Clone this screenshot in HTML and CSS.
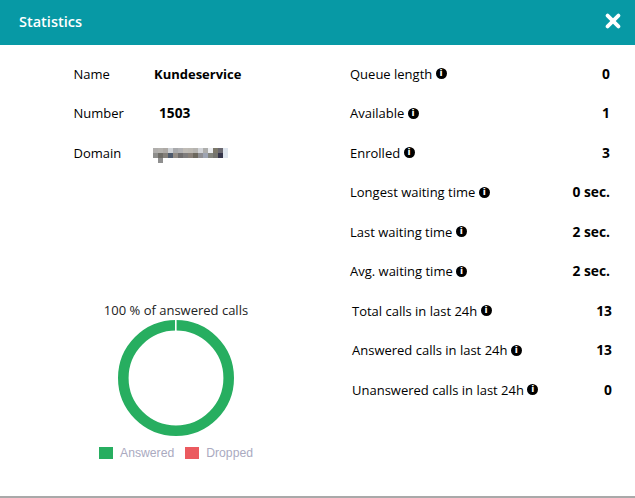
FILE: index.html
```html
<!DOCTYPE html>
<html lang="en">
<head>
<meta charset="utf-8">
<title>Statistics</title>
<link rel="stylesheet" href="styles.css">
</head>
<body>
<div class="modal">
  <header class="modal-header">
    <h1 class="modal-title">Statistics</h1>
    <svg class="close" viewBox="0 0 16 16" width="16" height="16" aria-label="Close"><path d="M2.6 2.6 13.4 13.4M13.4 2.6 2.6 13.4" stroke="#fff" stroke-width="3.8" stroke-linecap="round"/></svg>
  </header>
  <main class="modal-body">
    <section class="left">
      <div class="info">
        <div class="info-row"><span class="info-label">Name</span><strong class="info-value">Kundeservice</strong></div>
        <div class="info-row"><span class="info-label">Number</span><strong class="info-value number">1503</strong></div>
        <div class="info-row"><span class="info-label">Domain</span>
          <svg class="blur" width="75" height="15" viewBox="0 0 15 3" shape-rendering="crispEdges" aria-hidden="true">
            <rect x="0" y="0" width="1" height="1" fill="#b0aeac"/><rect x="1" y="0" width="1" height="1" fill="#b4b2ae"/><rect x="2" y="0" width="1" height="1" fill="#aeaaa6"/><rect x="3" y="0" width="1" height="1" fill="#cfd2d6"/><rect x="4" y="0" width="1" height="1" fill="#a9aaac"/><rect x="5" y="0" width="1" height="1" fill="#b2b2b4"/><rect x="6" y="0" width="1" height="1" fill="#c0bcb6"/><rect x="7" y="0" width="1" height="1" fill="#bdbab4"/><rect x="8" y="0" width="1" height="1" fill="#b6b4b0"/><rect x="9" y="0" width="1" height="1" fill="#d2d4d8"/><rect x="10" y="0" width="1" height="1" fill="#aeaeac"/><rect x="11" y="0" width="1" height="1" fill="#eceef2"/><rect x="12" y="0" width="1" height="1" fill="#7c786a"/><rect x="13" y="0" width="1" height="1" fill="#6a6870"/><rect x="14" y="0" width="1" height="1" fill="#dfe6ee"/>
            <rect x="0" y="1" width="1" height="1" fill="#8e8e8c"/><rect x="1" y="1" width="1" height="1" fill="#6e6c66"/><rect x="2" y="1" width="1" height="1" fill="#84807a"/><rect x="3" y="1" width="1" height="1" fill="#4e5a6c"/><rect x="4" y="1" width="1" height="1" fill="#928c86"/><rect x="5" y="1" width="1" height="1" fill="#6e6c6c"/><rect x="6" y="1" width="1" height="1" fill="#7e7c7c"/><rect x="7" y="1" width="1" height="1" fill="#888078"/><rect x="8" y="1" width="1" height="1" fill="#6c685e"/><rect x="9" y="1" width="1" height="1" fill="#8e8e92"/><rect x="10" y="1" width="1" height="1" fill="#9ea4b2"/><rect x="11" y="1" width="1" height="1" fill="#82847c"/><rect x="12" y="1" width="1" height="1" fill="#74746e"/><rect x="13" y="1" width="1" height="1" fill="#35354a"/><rect x="14" y="1" width="1" height="1" fill="#dfe6ee"/>
            <rect x="1" y="2" width="1" height="1" fill="#8f8f8f"/>
          </svg>
        </div>
      </div>
      <figure class="chart">
        <figcaption class="chart-title">100 % of answered calls</figcaption>
        <svg class="donut" width="116" height="116" viewBox="0 0 116 116" aria-hidden="true">
          <circle cx="58" cy="58" r="52.7" fill="none" stroke="#27ae60" stroke-width="10.6"/>
          <rect x="57" y="0" width="1.6" height="11" fill="#fff"/>
        </svg>
        <div class="legend">
          <span class="legend-item"><span class="swatch swatch-green"></span>Answered</span>
          <span class="legend-item"><span class="swatch swatch-red"></span>Dropped</span>
        </div>
      </figure>
    </section>
    <section class="right">
      <div class="stats">
        <div class="stat"><span class="stat-label">Queue length <i class="info-icon">i</i></span><strong class="stat-value">0</strong></div>
        <div class="stat"><span class="stat-label">Available <i class="info-icon">i</i></span><strong class="stat-value">1</strong></div>
        <div class="stat"><span class="stat-label">Enrolled <i class="info-icon">i</i></span><strong class="stat-value">3</strong></div>
        <div class="stat"><span class="stat-label">Longest waiting time <i class="info-icon">i</i></span><strong class="stat-value">0 sec.</strong></div>
        <div class="stat"><span class="stat-label">Last waiting time <i class="info-icon">i</i></span><strong class="stat-value">2 sec.</strong></div>
        <div class="stat"><span class="stat-label">Avg. waiting time <i class="info-icon">i</i></span><strong class="stat-value">2 sec.</strong></div>
      </div>
      <div class="stats stats-calls">
        <div class="stat"><span class="stat-label">Total calls in last 24h <i class="info-icon">i</i></span><strong class="stat-value">13</strong></div>
        <div class="stat"><span class="stat-label">Answered calls in last 24h <i class="info-icon">i</i></span><strong class="stat-value">13</strong></div>
        <div class="stat"><span class="stat-label">Unanswered calls in last 24h <i class="info-icon">i</i></span><strong class="stat-value">0</strong></div>
      </div>
    </section>
  </main>
</div>
</body>
</html>
```
FILE: styles.css
```css
* { box-sizing: border-box; }
html, body { margin: 0; padding: 0; height: 100%; overflow: hidden; }
body {
  font-family: "Open Sans", "Liberation Sans", sans-serif;
  font-size: 13px;
  line-height: 18px;
  color: #000;
  background: #fff;
}
.modal {
  height: 498px;
  display: flex;
  flex-direction: column;
  border-bottom: 2px solid #a9a9a9;
}
.modal-header {
  height: 45px;
  flex: none;
  background: #0799a5;
  color: #fff;
  display: flex;
  align-items: center;
  justify-content: space-between;
  padding: 0 14px 3px 19px;
}
.modal-title { margin: 0; padding-top: 2px; font-size: 14.5px; font-weight: 600; }
.close { display: block; }
.modal-body { flex: 1; display: flex; padding-top: 9px; }
.left { width: 350px; flex: none; padding-left: 73.5px; }
.info-row { height: 39.5px; display: flex; align-items: center; }
.info-label { width: 80.5px; flex: none; }
.info-value { font-weight: 700; }
.number { padding-left: 5px; font-size: 13.7px; }
.blur { display: block; margin: 5px 0 0 -1px; }
.chart {
  margin: 128px 0 0 -73.5px;
  width: 352px;
  display: flex;
  flex-direction: column;
  align-items: center;
}
.chart-title { color: #222; }
.donut { display: block; margin-top: 1px; }
.legend {
  margin-top: 8px;
  display: flex;
  gap: 11px;
  font-family: "Liberation Sans", Arial, sans-serif;
  font-size: 12.2px;
  color: #aaaabf;
}
.legend-item { display: flex; align-items: center; gap: 7px; }
.swatch { width: 14px; height: 12px; display: block; }
.swatch-green { background: #27ae60; }
.swatch-red { background: #eb5a5f; }
.right { width: 260px; flex: none; }
.stat { height: 39.5px; display: flex; align-items: center; justify-content: space-between; }
.stat-label { display: flex; align-items: center; white-space: pre; }
.stat-value { font-weight: 700; font-size: 13.8px; }
.stats-calls { margin: 0 -2px 0 2px; }
.info-icon {
  width: 11px;
  height: 11px;
  border-radius: 50%;
  background: #000;
  color: #fff;
  font: 700 9px/11px "DejaVu Sans", sans-serif;
  text-align: center;
  display: block;
  flex: none;
}
```
